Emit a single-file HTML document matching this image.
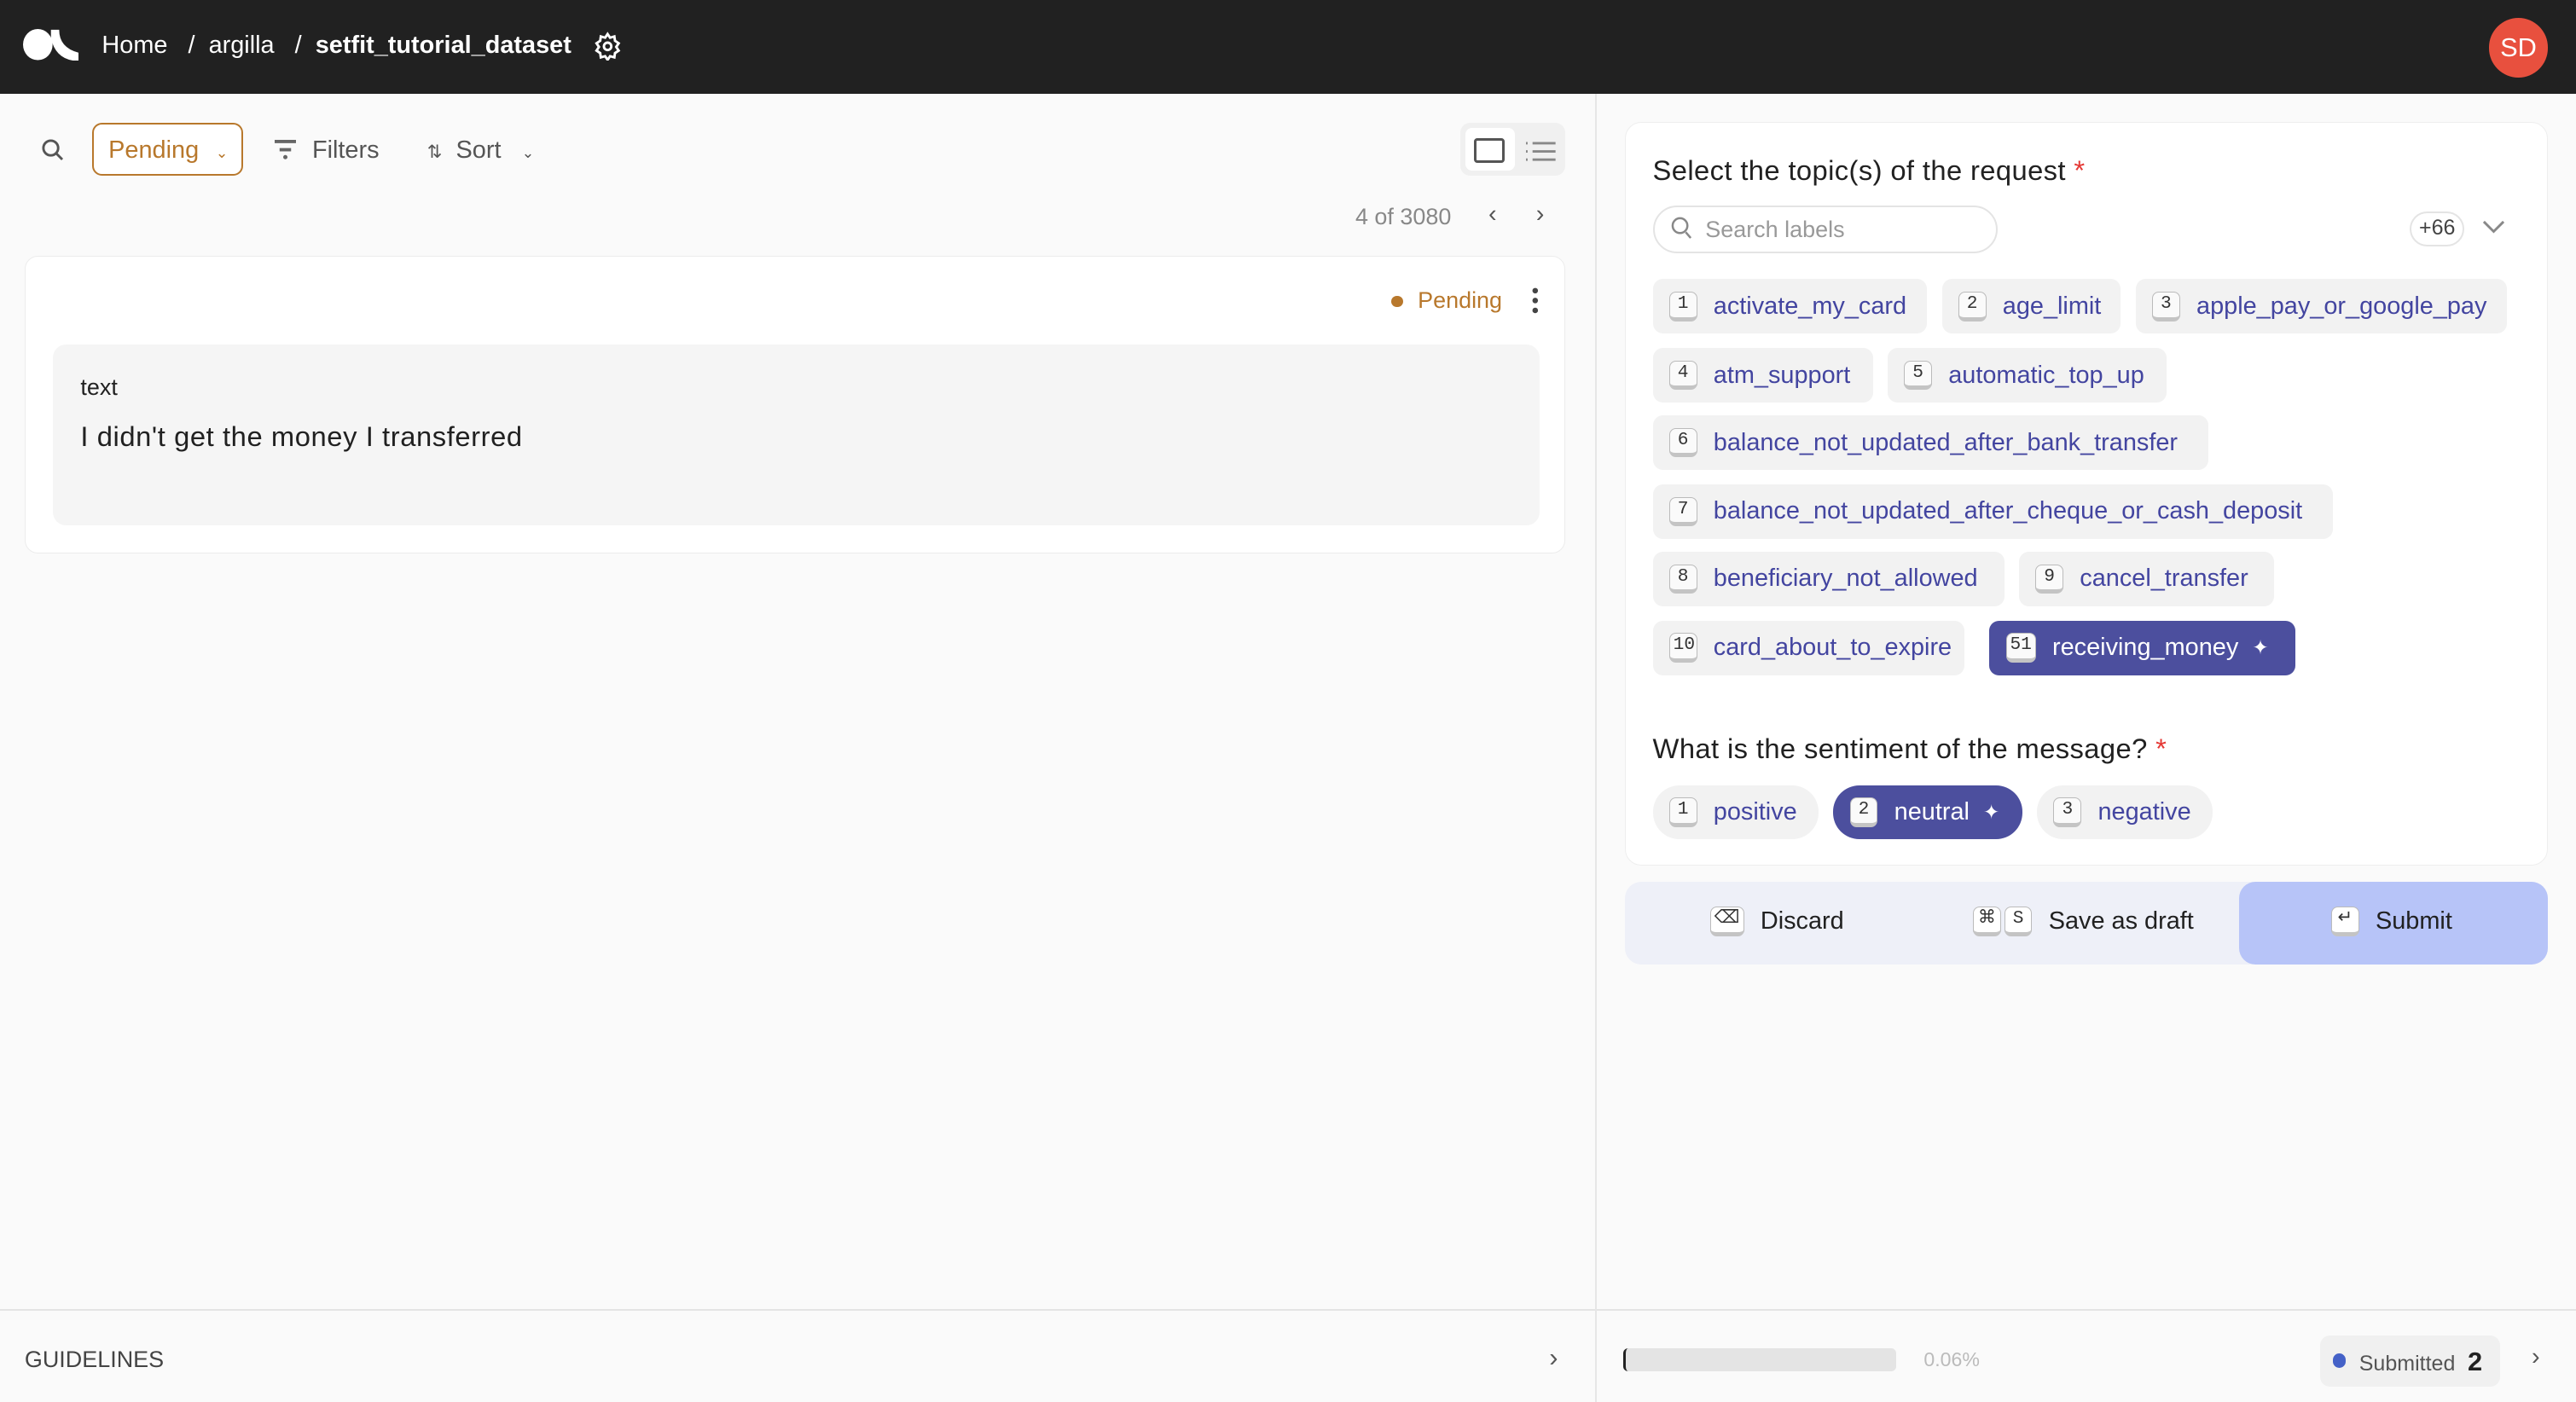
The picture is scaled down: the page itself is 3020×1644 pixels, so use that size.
<!DOCTYPE html>
<html><head><meta charset="utf-8"><style>
*{box-sizing:border-box;margin:0;padding:0}
html,body{width:3020px;height:1644px;overflow:hidden;background:#fafafa}
#r{zoom:1.926;width:1568px;height:854px;position:relative;font-family:"Liberation Sans",sans-serif;color:#212121}
.a{position:absolute}
.hdr{left:0;top:0;width:1568px;height:57px;background:#212121;color:#fff;font-size:15px}
.chip{position:absolute;height:33px;background:#f2f2f2;border-radius:6px;color:#4345a0;font-size:15px;display:flex;align-items:center;padding:0 10px;white-space:nowrap}
.k{display:inline-block;min-width:17px;height:18px;border:1px solid #bbb;border-bottom:3px solid #c4c4c4;border-radius:4px;background:#fafafa;color:#333;font-family:"Liberation Mono",monospace;font-size:11px;text-align:center;line-height:14px;margin-right:10px;padding:0 2px}
.sel{background:#4c4f9e;color:#fff}
.pill{border-radius:16px}
</style></head><body><div id="r">
<div class="a hdr">
 <svg class="a" style="left:14px;top:17px" width="34" height="20" viewBox="0 0 34 20"><ellipse cx="9" cy="10" rx="9" ry="9.5" fill="#fff"/><path d="M17 1 L22 1 Q22 12 34 15 L34 20 Q20 20 17 6Z" fill="#fff"/></svg>
 <div class="a" style="left:62px;top:19px">Home &nbsp;&nbsp;/&nbsp; argilla &nbsp;&nbsp;/&nbsp; <b>setfit_tutorial_dataset</b></div>
 <svg class="a" style="left:361px;top:19px" width="18" height="18" viewBox="0 0 24 24" fill="none" stroke="#fff" stroke-width="2"><circle cx="12" cy="12" r="3"/><path d="M12 2l2 3 3.5-1 .5 3.5 3 2-2 3 2 3-3 2-.5 3.5-3.5-1-2 3-2-3-3.5 1-.5-3.5-3-2 2-3-2-3 3-2 .5-3.5 3.5 1z"/></svg>
 <div class="a" style="left:1515px;top:11px;width:36px;height:36px;border-radius:18px;background:#e8503e;color:#fff;font-size:16px;text-align:center;line-height:36px">SD</div>
</div>
<div class="a" style="left:971px;top:57px;width:1px;height:797px;background:#e6e6e6"></div>
<svg class="a" style="left:25px;top:84px" width="14" height="14" viewBox="0 0 14 14" fill="none" stroke="#555" stroke-width="1.5"><circle cx="6" cy="6" r="4.5"/><path d="M9.5 9.5L13 13"/></svg>
<div class="a" style="left:56px;top:75px;width:92px;height:32px;border:1.5px solid #b8782c;border-radius:6px;background:#fff;color:#b8782c;font-size:15px;padding:7px 0 0 9px">Pending <span style="font-size:9px;margin-left:6px">&#8964;</span></div>
<svg class="a" style="left:167px;top:85px" width="13" height="12" viewBox="0 0 13 12" fill="#666"><rect x="0" y="0" width="13" height="2"/><rect x="3" y="5" width="7" height="2"/><circle cx="6.5" cy="10.5" r="1.3"/></svg>
<div class="a" style="left:190px;top:83px;font-size:15px;color:#555">Filters</div>
<div class="a" style="left:260px;top:83px;font-size:15px;color:#555"><span style="font-size:11px">&#8645;</span>&nbsp; Sort &nbsp;&nbsp;<span style="font-size:9px">&#8964;</span></div>
<div class="a" style="left:889px;top:75px;width:64px;height:32px;background:#f0f0f0;border-radius:6px"></div>
<div class="a" style="left:892px;top:78px;width:30px;height:26px;background:#fff;border-radius:4px"></div>
<div class="a" style="left:897px;top:84px;width:19px;height:15px;border:2px solid #555;border-radius:2px"></div>
<svg class="a" style="left:929px;top:86px" width="18" height="12" viewBox="0 0 18 12" stroke="#888" stroke-width="1.5"><path d="M0 1h1M0 6h1M0 11h1M4 1h14M4 6h14M4 11h14"/></svg>
<div class="a" style="left:825px;top:124px;font-size:14px;color:#888">4 of 3080</div>
<div class="a" style="left:906px;top:122px;font-size:15px;color:#555">&#8249;</div>
<div class="a" style="left:935px;top:122px;font-size:15px;color:#555">&#8250;</div>
<div class="a" style="left:15px;top:156px;width:938px;height:181px;background:#fff;border:1px solid #ececec;border-radius:8px"></div>
<div class="a" style="left:847px;top:180px;width:7px;height:7px;border-radius:4px;background:#b8782c"></div>
<div class="a" style="left:863px;top:175px;font-size:14px;color:#b8782c">Pending</div>
<svg class="a" style="left:932px;top:175px" width="5" height="16"><circle cx="2.5" cy="2" r="1.7" fill="#444"/><circle cx="2.5" cy="8" r="1.7" fill="#444"/><circle cx="2.5" cy="14" r="1.7" fill="#444"/></svg>
<div class="a" style="left:32px;top:210px;width:905px;height:110px;background:#f5f5f5;border-radius:8px"></div>
<div class="a" style="left:49px;top:228px;font-size:14px">text</div>
<div class="a" style="left:49px;top:256px;font-size:17px;letter-spacing:0.3px">I didn't get the money I transferred</div>
<div class="a" style="left:0;top:797px;width:971px;height:1px;background:#e4e4e4"></div>
<div class="a" style="left:972px;top:797px;width:596px;height:1px;background:#e4e4e4"></div>
<div class="a" style="left:15px;top:820px;font-size:14px;color:#444">GUIDELINES</div>
<div class="a" style="left:943px;top:817px;font-size:16px;color:#555">&#8250;</div>
<div class="a" style="left:989px;top:74px;width:562px;height:453px;background:#fff;border:1px solid #eee;border-radius:10px"></div>
<div class="a" style="left:1006px;top:94px;font-size:17px;letter-spacing:0.2px">Select the topic(s) of the request <span style="color:#e53935">*</span></div>
<div class="a" style="left:1006px;top:125px;width:210px;height:29px;border:1.5px solid #e4e4e4;border-radius:15px;font-size:14px;color:#999;padding:6px 0 0 31px">Search labels</div>
<svg class="a" style="left:1017px;top:132px" width="13" height="14" viewBox="0 0 13 14" fill="none" stroke="#888" stroke-width="1.3"><circle cx="5.5" cy="5.5" r="4.5"/><path d="M9 9.5l3 3.5"/></svg>
<div class="a" style="left:1467px;top:129px;width:33px;height:21px;border:1.5px solid #e4e4e4;border-radius:11px;font-size:13px;color:#444;text-align:center;line-height:18px">+66</div>
<svg class="a" style="left:1511px;top:134px" width="14" height="9"><path d="M1 1l6 6 6-6" fill="none" stroke="#888" stroke-width="1.5"/></svg>
<div class="chip" style="left:1006px;top:170px;width:167px"><span class="k">1</span>activate_my_card</div>
<div class="chip" style="left:1182px;top:170px;width:109px"><span class="k">2</span>age_limit</div>
<div class="chip" style="left:1300px;top:170px;width:226px"><span class="k">3</span>apple_pay_or_google_pay</div>
<div class="chip" style="left:1006px;top:212px;width:134px"><span class="k">4</span>atm_support</div>
<div class="chip" style="left:1149px;top:212px;width:170px"><span class="k">5</span>automatic_top_up</div>
<div class="chip" style="left:1006px;top:253px;width:338px"><span class="k">6</span>balance_not_updated_after_bank_transfer</div>
<div class="chip" style="left:1006px;top:295px;width:414px"><span class="k">7</span>balance_not_updated_after_cheque_or_cash_deposit</div>
<div class="chip" style="left:1006px;top:336px;width:214px"><span class="k">8</span>beneficiary_not_allowed</div>
<div class="chip" style="left:1229px;top:336px;width:155px"><span class="k">9</span>cancel_transfer</div>
<div class="chip" style="left:1006px;top:378px;width:190px"><span class="k">10</span>card_about_to_expire</div>
<div class="chip sel" style="left:1211px;top:378px;width:186px"><span class="k">51</span>receiving_money&nbsp;&nbsp;<span style="font-size:12px">&#10022;</span></div>
<div class="a" style="left:1006px;top:446px;font-size:17px;letter-spacing:0.2px">What is the sentiment of the message? <span style="color:#e53935">*</span></div>
<div class="chip pill" style="left:1006px;top:478px;width:101px"><span class="k">1</span>positive</div>
<div class="chip pill sel" style="left:1116px;top:478px;width:115px"><span class="k">2</span>neutral&nbsp;&nbsp;<span style="font-size:12px">&#10022;</span></div>
<div class="chip pill" style="left:1240px;top:478px;width:107px"><span class="k">3</span>negative</div>
<div class="a" style="left:989px;top:537px;width:562px;height:50px;background:#eef0f8;border-radius:10px"></div>
<div class="a" style="left:1363px;top:537px;width:188px;height:50px;background:#b7c4f8;border-radius:10px"></div>
<div class="a" style="left:1041px;top:552px;font-size:15px;display:flex;align-items:center"><span class="k" style="background:#fff">&#9003;</span>Discard</div>
<div class="a" style="left:1201px;top:552px;font-size:15px;display:flex;align-items:center"><span class="k" style="background:#fff;margin-right:2px">&#8984;</span><span class="k" style="background:#fff">S</span>Save as draft</div>
<div class="a" style="left:1419px;top:552px;font-size:15px;display:flex;align-items:center"><span class="k" style="background:#fff">&#8629;</span>Submit</div>
<div class="a" style="left:988px;top:821px;width:166px;height:14px;background:#e4e4e4;border-radius:3px;border-left:2px solid #222"></div>
<div class="a" style="left:1171px;top:821px;font-size:12px;color:#bbb">0.06%</div>
<div class="a" style="left:1412px;top:813px;width:110px;height:31px;background:#f0f0f0;border-radius:6px"></div>
<div class="a" style="left:1420px;top:824px;width:8px;height:9px;border-radius:5px;background:#4461c7"></div>
<div class="a" style="left:1436px;top:820px;font-size:13px;color:#555">Submitted <b style="font-size:16px;color:#222;margin-left:4px">2</b></div>
<div class="a" style="left:1541px;top:818px;font-size:15px;color:#555">&#8250;</div>
</div></body></html>
